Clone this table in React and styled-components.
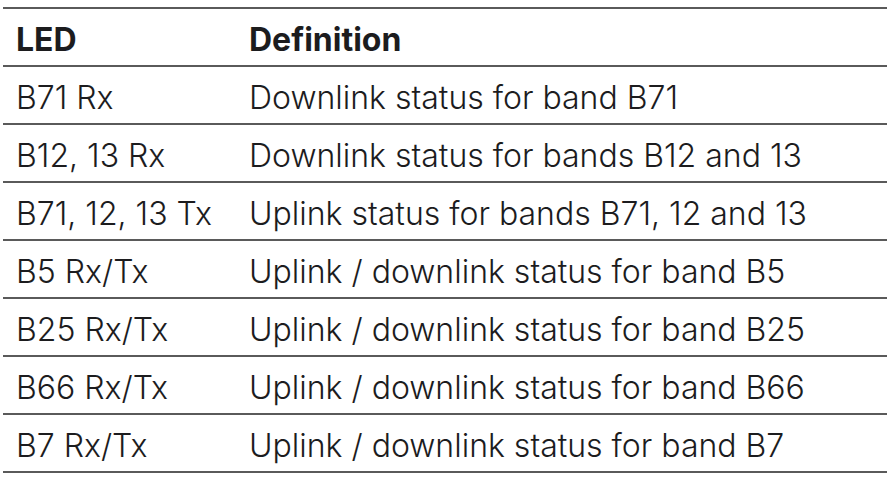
import React from "react";
import styled, { createGlobalStyle } from "styled-components";

const Global = createGlobalStyle`
  html, body { margin: 0; padding: 0; background: #fff; }
  body { font-family: Inter, "Liberation Sans", Arial, sans-serif; color: #1c1c1e; }
`;

const Page = styled.div`
  width: 890px;
  height: 480px;
  padding: 7px 3px 0 3px;
  box-sizing: border-box;
`;

const Table = styled.div`
  width: 884px;
  border-top: 2px solid #5a5a5a;
  display: grid;
  grid-template-columns: 233px 1fr;
`;

const Cell = styled.div`
  box-sizing: border-box;
  height: 58px;
  border-bottom: 2px solid #5a5a5a;
  display: flex;
  align-items: center;
  padding: 4px 0 0 13px;
  font-family: Inter, "Liberation Sans", Arial, sans-serif;
  font-size: 32px;
  font-weight: ${(p) => (p.$head ? 700 : 300)};
  white-space: nowrap;
  color: #1c1c1e;
`;

const rows = [
  ["B71 Rx", "Downlink status for band B71"],
  ["B12, 13 Rx", "Downlink status for bands B12 and 13"],
  ["B71, 12, 13 Tx", "Uplink status for bands B71, 12 and 13"],
  ["B5 Rx/Tx", "Uplink / downlink status for band B5"],
  ["B25 Rx/Tx", "Uplink / downlink status for band B25"],
  ["B66 Rx/Tx", "Uplink / downlink status for band B66"],
  ["B7 Rx/Tx", "Uplink / downlink status for band B7"],
];

export default function App() {
  return (
    <>
      <Global />
      <Page>
        <Table>
          <Cell $head>LED</Cell>
          <Cell $head>Definition</Cell>
          {rows.map(([a, b]) => (
            <React.Fragment key={a}>
              <Cell>{a}</Cell>
              <Cell>{b}</Cell>
            </React.Fragment>
          ))}
        </Table>
      </Page>
    </>
  );
}
